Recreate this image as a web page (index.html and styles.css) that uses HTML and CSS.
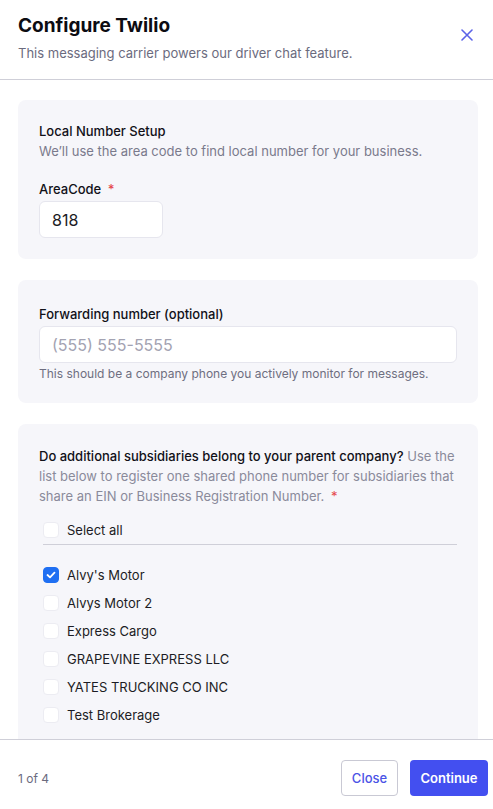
FILE: index.html
```html
<!DOCTYPE html>
<html lang="en">
<head>
  <meta charset="UTF-8" />
  <meta name="viewport" content="width=device-width, initial-scale=1.0" />
  <title>Configure Twilio</title>
  <link rel="stylesheet" href="styles.css">
</head>
<body>
  <div class="modal">
    <!-- header -->
    <div class="modal-header">
      <div>
        <h1 class="title">Configure Twilio</h1>
        <p class="subtitle">This messaging carrier powers our driver chat feature.</p>
      </div>
      <button class="close-x" aria-label="Close">
        <svg width="12" height="12" viewBox="0 0 12 12"><path d="M1 1 L11 11 M11 1 L1 11" stroke="#5b63e8" stroke-width="1.6" stroke-linecap="round"/></svg>
      </button>
    </div>

    <!-- content -->
    <div class="modal-body">
      <div class="card card-area">
        <div class="card-title">Local Number Setup</div>
        <div class="card-desc">We’ll use the area code to find local number for your business.</div>
        <label class="label label-spaced">AreaCode <span class="req">*</span></label>
        <input class="input input-short" type="text" value="818" />
      </div>

      <div class="card card-fwd">
        <label class="label">Forwarding number (optional)</label>
        <input class="input" type="text" placeholder="(555) 555-5555" />
        <div class="hint">This should be a company phone you actively monitor for messages.</div>
      </div>

      <div class="card">
        <p class="question"><strong>Do additional subsidiaries belong to your parent company?</strong> Use the list below to register one shared phone number for subsidiaries that share an EIN or Business Registration Number. <span class="req">*</span></p>
        <div class="checklist">
          <label class="check-row select-all"><span class="box"></span>Select all</label>
          <div class="items">
            <label class="check-row"><span class="box checked"><svg width="10" height="8" viewBox="0 0 10 8"><path d="M1.5 4 L4 6.3 L8.5 1.7" fill="none" stroke="#fff" stroke-width="1.8" stroke-linecap="round" stroke-linejoin="round"/></svg></span>Alvy's Motor</label>
            <label class="check-row"><span class="box"></span>Alvys Motor 2</label>
            <label class="check-row"><span class="box"></span>Express Cargo</label>
            <label class="check-row"><span class="box"></span>GRAPEVINE EXPRESS LLC</label>
            <label class="check-row"><span class="box"></span>YATES TRUCKING CO INC</label>
            <label class="check-row"><span class="box"></span>Test Brokerage</label>
          </div>
        </div>
      </div>
    </div>

    <!-- footer -->
    <div class="modal-footer">
      <span class="step">1 of 4</span>
      <div class="actions">
        <button class="btn btn-outline">Close</button>
        <button class="btn btn-primary">Continue</button>
      </div>
    </div>
  </div>
</body>
</html>
```

FILE: styles.css
```css
html, body {
  margin: 0;
  padding: 0;
  height: 100vh;
  overflow: hidden;
  background: #fff;
  font-family: Inter, "Noto Sans", sans-serif;
  color: #111118;
}

.modal {
  display: flex;
  flex-direction: column;
  height: 100vh;
}

.modal-header {
  display: flex;
  justify-content: space-between;
  align-items: flex-start;
  padding: 14px 18px 17px 18px;
  border-bottom: 1px solid #cfcfd8;
}
.title {
  margin: 0;
  font-size: 19px;
  line-height: 24px;
  font-weight: 700;
  color: #0c0c12;
}
.subtitle {
  margin: 6px 0 0;
  font-size: 13px;
  line-height: 18px;
  color: #6b6b7e;
}
.close-x {
  background: none;
  border: none;
  padding: 0;
  margin: 14px 1px 0 0;
  width: 14px;
  height: 14px;
  display: flex;
  align-items: center;
  justify-content: center;
  cursor: pointer;
}

.modal-body {
  flex: 1;
  overflow: hidden;
  padding: 20px 15px 0 18px;
  display: flex;
  flex-direction: column;
  gap: 21px;
}

.card {
  background: #f6f6fa;
  border-radius: 8px;
  padding: 22px 21px 21px 21px;
  flex-shrink: 0;
}
.card-fwd { padding-top: 25px; }

.card-title {
  font-size: 13px;
  line-height: 18px;
  font-weight: 500;
  color: #111118;
}
.card-desc {
  margin-top: 2px;
  font-size: 13px;
  line-height: 18px;
  color: #7a7a8c;
}

.label {
  display: block;
  font-size: 13px;
  line-height: 18px;
  font-weight: 500;
  color: #111118;
}
.label-spaced { margin-top: 20px; }
.req { color: #e5484d; margin-left: 3px; }

.input {
  display: block;
  box-sizing: border-box;
  width: 100%;
  height: 37px;
  margin-top: 3px;
  padding: 0 12px;
  border: 1px solid #e6e6ee;
  border-radius: 6px;
  background: #fff;
  font-family: inherit;
  font-size: 16px;
  color: #1c1c24;
  outline: none;
}
.input::placeholder { color: #a3a3b2; }
.input-short { width: 124px; }

.hint {
  margin-top: 3px;
  font-size: 12px;
  line-height: 16px;
  color: #6e6e80;
}

.question {
  margin: 0;
  font-size: 13px;
  line-height: 20px;
  color: #8a8a9a;
}
.question strong {
  font-weight: 500;
  color: #111118;
}

.checklist { margin: 10px 0 0 4px; }
.check-row {
  display: flex;
  align-items: center;
  gap: 8px;
  height: 28px;
  font-size: 13px;
  color: #1c1c24;
}
.select-all {
  border-bottom: 1px solid #cfcfd8;
  height: 28px;
}
.items { padding-top: 16px; }

.box {
  box-sizing: border-box;
  width: 16px;
  height: 16px;
  border-radius: 4px;
  background: #fff;
  border: 1px solid #ececf2;
  display: flex;
  align-items: center;
  justify-content: center;
  flex-shrink: 0;
}
.box.checked {
  background: #1f6ff2;
  border-color: #1f6ff2;
}

.modal-footer {
  display: flex;
  justify-content: space-between;
  align-items: center;
  border-top: 1px solid #cfcfd8;
  padding: 20px 5px 13px 18px;
}
.step {
  font-size: 12px;
  color: #6b6b7e;
}
.actions {
  display: flex;
  gap: 12px;
}
.btn {
  height: 36px;
  border-radius: 4px;
  font-family: inherit;
  font-size: 13px;
  cursor: pointer;
}
.btn-outline {
  width: 57px;
  background: #fff;
  border: 1px solid #c9c9d4;
  color: #4a53e6;
  font-weight: 500;
}
.btn-primary {
  width: 78px;
  background: #434ff0;
  border: none;
  color: #fff;
  font-weight: 600;
}
```
